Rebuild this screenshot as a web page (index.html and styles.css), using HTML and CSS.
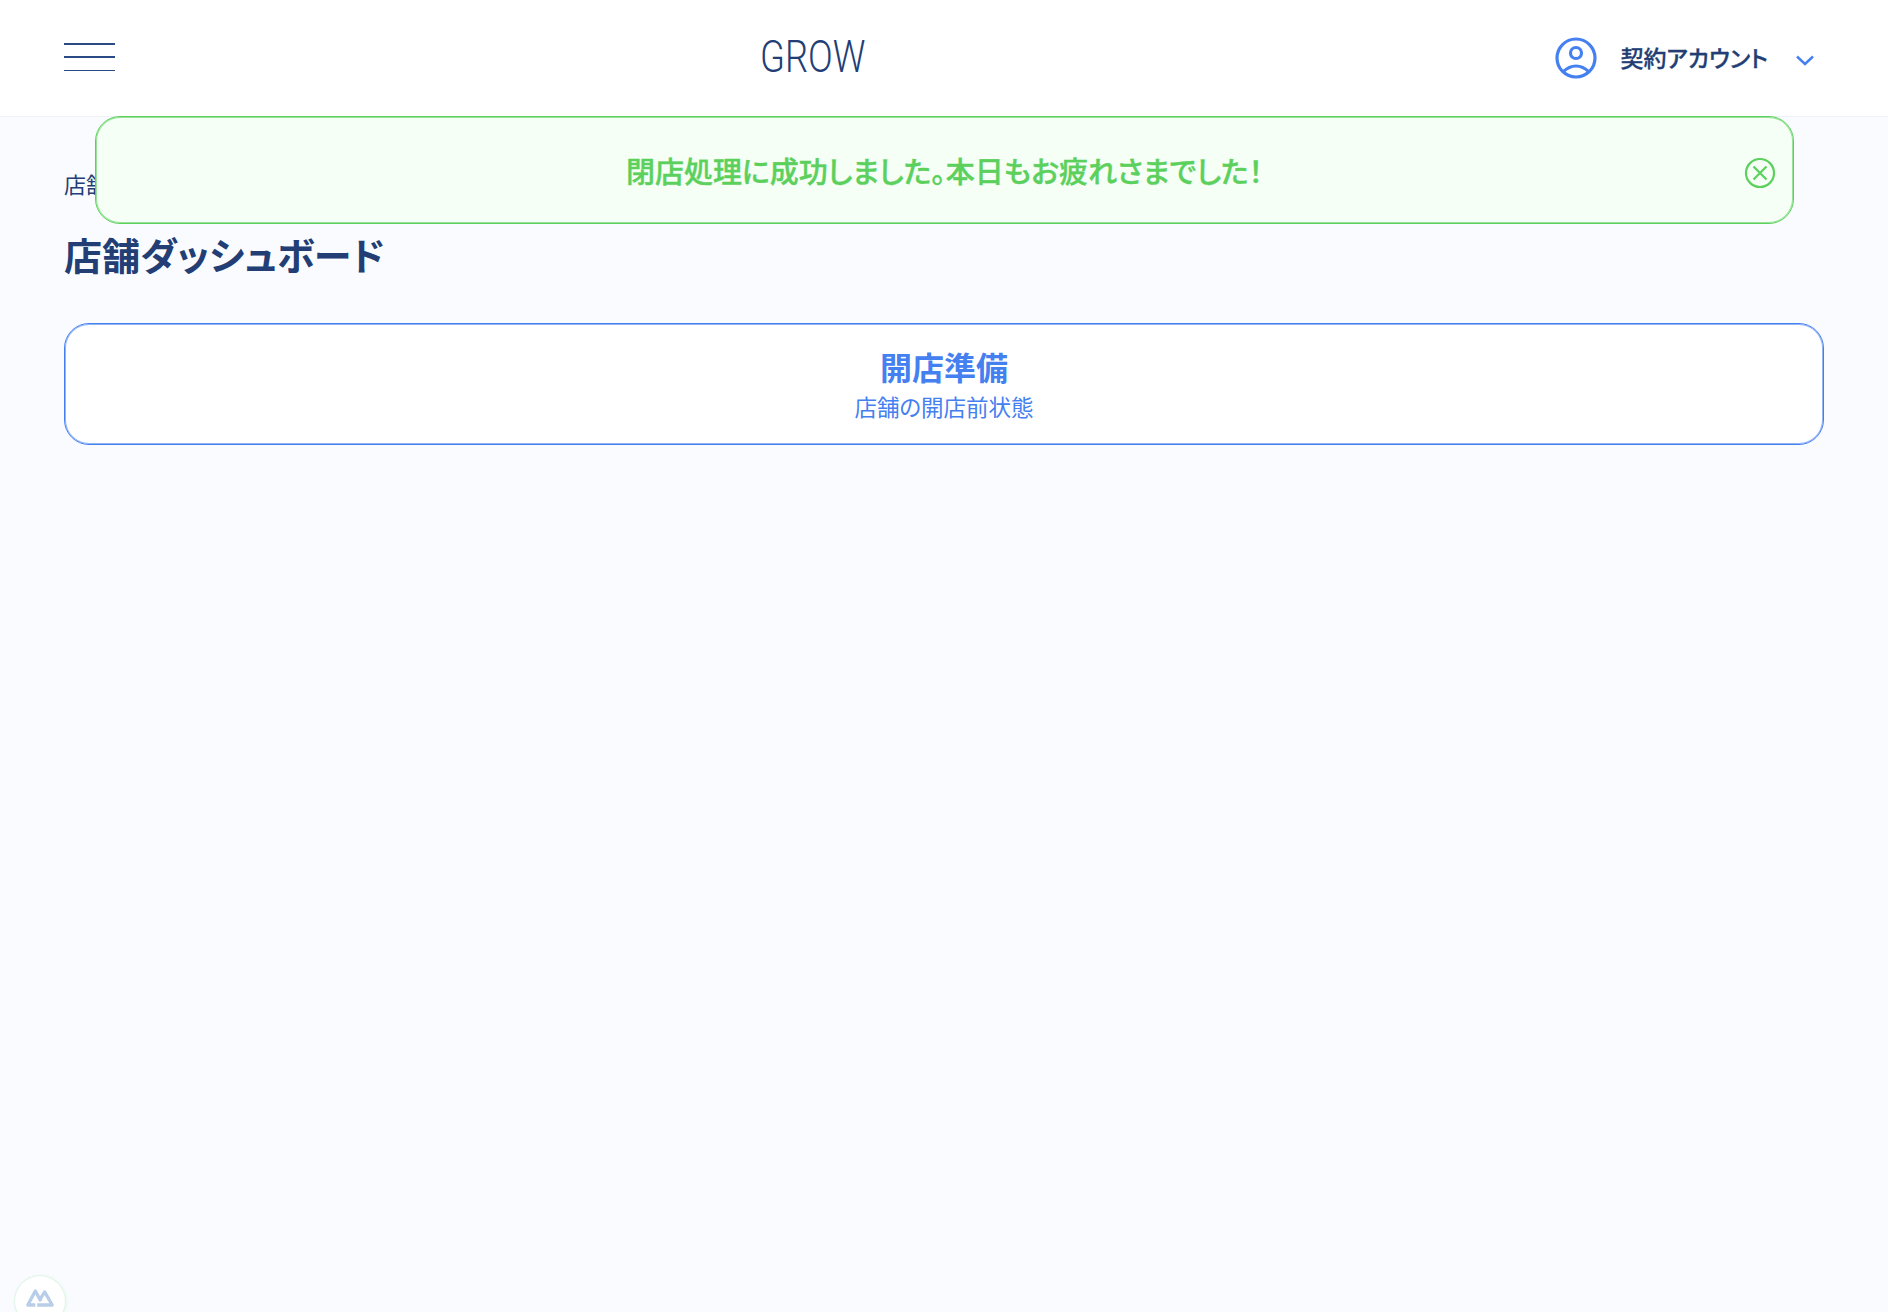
FILE: index.html
```html
<!DOCTYPE html>
<html lang="ja">
<head>
<meta charset="utf-8">
<title>GROW</title>
<link rel="stylesheet" href="styles.css">
</head>
<body>
<header class="header">
  <button class="burger" aria-label="メニュー"><span></span><span></span><span></span></button>
  <div class="logo"><span class="logo-text">GROW</span></div>
  <div class="account">
    <svg class="avatar" viewBox="0 0 42 42" width="42" height="42" fill="none" stroke="#4580f0" stroke-width="3.2">
      <circle cx="21" cy="21" r="19"/>
      <circle cx="21" cy="16" r="5.5"/>
      <path d="M8 35C12 31 16 29 21 29S30 31 34 35"/>
    </svg>
    <span class="account-name">契約アカウント</span>
    <svg class="chevron" viewBox="0 0 18 11" width="18" height="11" fill="none" stroke="#4580f0" stroke-width="2.400"><path d="M1 1.500L9 9L17 1.500"/></svg>
  </div>
</header>
<main class="main">
  <p class="crumb">店舗ダッシュボード</p>
  <h1 class="title">店舗ダッシュボード</h1>
  <button class="card">
    <span class="card-title">開店準備</span>
    <span class="card-sub">店舗の開店前状態</span>
  </button>
</main>
<div class="toast">
  <span class="toast-text">閉店処理に成功しました。本日もお疲れさまでした！</span>
  <svg class="toast-close" viewBox="0 0 32 32" width="32" height="32" fill="none" stroke="#5cd05c" stroke-width="2.200"><circle cx="16" cy="16" r="14"/><path d="M9.500 9.500L22.500 22.500M22.500 9.500L9.500 22.500"/></svg>
</div>
<div class="devtools">
  <svg viewBox="0 0 32 22" width="30" height="21" fill="none" stroke="#b7cde8" stroke-width="3.500" stroke-linejoin="round"><path d="M11 19H3L11 4L17 15"/><path d="M13 19H29L21 5L16 13"/></svg>
</div>
</body>
</html>
```
FILE: styles.css
```css
* { box-sizing: border-box; }
html, body { margin: 0; height: 100%; }
body {
  position: relative;
  height: 1312px;
  overflow: hidden;
  background: #f9fbff;
  color: #223e74;
  font-family: "Noto Sans CJK JP", "Noto Sans", sans-serif;
  font-feature-settings: "palt";
}
.header {
  height: 117px;
  display: flex;
  align-items: center;
  padding: 0 74px 0 64px;
  background: #fff;
  border-bottom: 1px solid #eef1f5;
}
.burger {
  width: 51px;
  height: 28px;
  margin-top: -2px;
  padding: 0;
  border: 0;
  background: none;
  display: flex;
  flex-direction: column;
  justify-content: space-between;
}
.burger span { display: block; height: 1.500px; background: #2a4a85; }
.logo { position: absolute; left: 760px; top: 31px; width: 106px; }
.logo-text {
  display: block;
  font-family: "Roboto", sans-serif;
  font-weight: 300;
  font-size: 45px;
  line-height: 52px;
  color: #223e74;
  transform: scaleX(0.81);
  transform-origin: left center;
  white-space: nowrap;
}
.account { margin-left: auto; display: flex; align-items: center; }
.avatar { margin-right: 23px; }
.account-name { font-size: 23px; font-weight: 500; line-height: 32px; margin-top: -2px; -webkit-text-stroke: 0.3px #223e74; }
.chevron { margin-left: 28px; margin-top: 5px; }
.main { padding: 50px 64px 0; }
.crumb { margin: 0; font-size: 22px; line-height: 32px; }
.title { margin: 29px 0 0; font-size: 38px; font-weight: 700; line-height: 52px; }
.card {
  width: 100%;
  height: 122px;
  margin-top: 43px;
  display: flex;
  flex-direction: column;
  align-items: center;
  justify-content: center;
  gap: 1px;
  background: #fff;
  border: 1px solid #4580f0;
  box-shadow: inset 0 0 0 1px rgba(69, 128, 240, 0.6);
  border-radius: 25px;
  color: #4580f0;
  font-family: inherit;
  font-feature-settings: inherit;
  padding: 0 0 4px;
}
.card-title { font-size: 32px; font-weight: 700; line-height: 46px; }
.card-sub { font-size: 22.500px; line-height: 32px; }
.toast {
  position: absolute;
  left: 95px;
  top: 116px;
  width: 1699px;
  height: 108px;
  display: flex;
  align-items: center;
  justify-content: center;
  background: #f5fff6;
  border: 1px solid #5cd05c;
  box-shadow: inset 0 0 0 1px rgba(92, 208, 92, 0.6);
  border-radius: 25px;
  color: #5cd05c;
}
.toast-text { font-size: 29px; font-weight: 500; line-height: 40px; margin-top: -1px; -webkit-text-stroke: 0.4px #5cd05c; }
.toast-close { position: absolute; right: 17px; top: 40px; }
.devtools {
  position: absolute;
  left: 15px;
  top: 1276px;
  width: 50px;
  height: 50px;
  display: flex;
  justify-content: center;
  padding-top: 11px;
  background: #fff;
  border-radius: 50%;
  box-shadow: 0 0 0 1px #dff5e6, 1px 1px 4px #e3f6e9;
}
```
